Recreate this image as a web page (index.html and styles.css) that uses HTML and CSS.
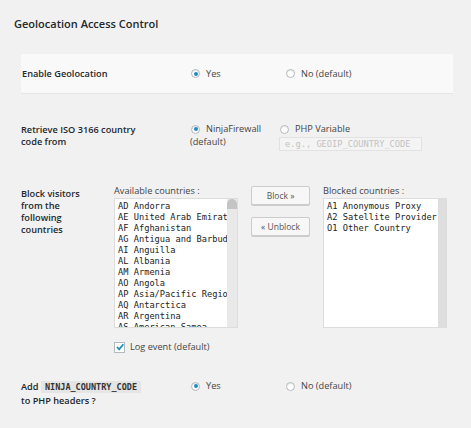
FILE: index.html
```html
<!DOCTYPE html>
<html>
<head>
<meta charset="utf-8">
<link rel="stylesheet" href="styles.css">
</head>
<body>
<h3 class="title">Geolocation Access Control</h3>

<div class="row row-box">
  <div class="label">Enable Geolocation</div>
  <div class="opts">
    <label class="opt opt-first"><span class="radio on"></span>Yes</label>
    <label class="opt"><span class="radio"></span>No (default)</label>
  </div>
</div>

<div class="row row-src">
  <div class="label">Retrieve ISO 3166 country<br>code from</div>
  <div class="opts">
    <div class="src-col">
      <label class="opt"><span class="radio on"></span>NinjaFirewall</label>
      <div class="src-default">(default)</div>
    </div>
    <div class="src-col">
      <label class="opt"><span class="radio"></span>PHP Variable</label>
      <div class="php-input">e.g., GEOIP_COUNTRY_CODE</div>
    </div>
  </div>
</div>

<div class="row row-block">
  <div class="label label-narrow">Block visitors<br>from the<br>following<br>countries</div>
  <div class="lists">
    <div class="list-col">
      <div class="list-title">Available countries :</div>
      <div class="listbox">
        <div class="items">
          <div>AD Andorra</div>
          <div>AE United Arab Emirates</div>
          <div>AF Afghanistan</div>
          <div>AG Antigua and Barbuda</div>
          <div>AI Anguilla</div>
          <div>AL Albania</div>
          <div>AM Armenia</div>
          <div>AO Angola</div>
          <div>AP Asia/Pacific Region</div>
          <div>AQ Antarctica</div>
          <div>AR Argentina</div>
          <div>AS American Samoa</div>
        </div>
        <div class="sbar"><div class="thumb"></div></div>
      </div>
      <label class="check-row"><span class="checkbox"><svg viewBox="0 0 10 10" width="10" height="10"><path d="M2 5 L4.2 7.3 L8.3 2.3" fill="none" stroke="#1e8cbe" stroke-width="1.8"/></svg></span>Log event (default)</label>
    </div>
    <div class="btn-col">
      <button class="btn">Block »</button>
      <button class="btn">« Unblock</button>
    </div>
    <div class="list-col">
      <div class="list-title">Blocked countries :</div>
      <div class="listbox listbox-r">
        <div class="items">
          <div>A1 Anonymous Proxy</div>
          <div>A2 Satellite Provider</div>
          <div>O1 Other Country</div>
        </div>
        <div class="sbar sbar-r"></div>
      </div>
    </div>
  </div>
</div>

<div class="row row-hdr">
  <div class="label">Add <code class="code">NINJA_COUNTRY_CODE</code><br>to PHP headers ?</div>
  <div class="opts">
    <label class="opt opt-first"><span class="radio on"></span>Yes</label>
    <label class="opt"><span class="radio"></span>No (default)</label>
  </div>
</div>
</body>
</html>
```

FILE: styles.css
```css
html, body {
  margin: 0;
  padding: 0;
  background: #f1f1f1;
}
body {
  font-family: "Open Sans", "Liberation Sans", sans-serif;
  font-size: 9.2px;
  color: #444;
  width: 471px;
  height: 428px;
  overflow: hidden;
}
.title {
  margin: 0;
  padding: 16px 0 0 14px;
  font-size: 11px;
  font-weight: 600;
  color: #23282d;
  line-height: 16px;
}
.row {
  display: flex;
  margin-left: 21px;
  width: 432px;
}
.label {
  width: 169px;
  flex: none;
  font-weight: 600;
  color: #23282d;
  line-height: 12px;
}
.label-narrow {
  width: 93px;
}
.opts {
  display: flex;
  align-items: flex-start;
}
.opt {
  display: flex;
  align-items: center;
  line-height: 12px;
  white-space: nowrap;
}
.opt-first {
  width: 95px;
}
.radio {
  width: 7px;
  height: 7px;
  border: 1px solid #b4b9be;
  border-radius: 50%;
  background: #fff;
  box-shadow: inset 0 1px 1px rgba(0,0,0,0.1);
  margin: 0 6px 0 1px;
  display: flex;
  align-items: center;
  justify-content: center;
  flex: none;
}
.radio.on::after {
  content: "";
  width: 4px;
  height: 4px;
  border-radius: 50%;
  background: #1e8cbe;
}
.row-box {
  margin-top: 22px;
  background: #f9f9f9;
  border-bottom: 1px solid #e5e5e5;
  height: 39px;
  align-items: center;
}
.row-box .label {
  padding-left: 1px;
  width: 168px;
}
.row-src {
  margin-top: 29px;
}
.row-src .label {
  padding-top: 1px;
}
.src-col {
  display: flex;
  flex-direction: column;
}
.src-col:first-child {
  width: 89px;
}
.src-default {
  line-height: 14px;
}
.php-input {
  margin-top: 2px;
  width: 136px;
  height: 12px;
  border: 1px solid #e2e2e2;
  background: #f4f4f4;
  font-family: "DejaVu Sans Mono", monospace;
  font-size: 8.7px;
  line-height: 12px;
  color: #c2c2c2;
  padding-left: 5px;
}
.row-block {
  margin-top: 34px;
}
.row-block .label {
  padding-top: 3px;
}
.lists {
  display: flex;
  align-items: flex-start;
}
.list-col {
  display: flex;
  flex-direction: column;
}
.list-title {
  line-height: 12px;
  color: #444;
}
.listbox {
  display: flex;
  width: 122px;
  height: 128px;
  border: 1px solid #ddd;
  background: #fff;
  margin-top: 1px;
  overflow: hidden;
}
.items {
  flex: 1;
  overflow: hidden;
  padding: 2px 0 0 3px;
  font-family: "DejaVu Sans Mono", monospace;
  font-size: 8.7px;
  line-height: 11px;
  color: #222;
  white-space: nowrap;
}
.sbar {
  width: 10px;
  flex: none;
  background: #e9e9e9;
}
.thumb {
  width: 10px;
  height: 10px;
  background: #c4c4c4;
  border-radius: 5px 5px 0 0;
}
.sbar-r {
  width: 8px;
  background: #dedede;
}
.check-row {
  display: flex;
  align-items: center;
  margin-top: 13px;
  line-height: 12px;
}
.checkbox {
  width: 9px;
  height: 9px;
  border: 1px solid #b4b9be;
  background: #fff;
  margin-right: 5px;
  position: relative;
  display: block;
}
.checkbox svg {
  position: absolute;
  left: 0;
  top: -1px;
}
.btn-col {
  display: flex;
  flex-direction: column;
  gap: 12px;
  margin: 1px 13px 0 13px;
}
.btn {
  width: 59px;
  height: 19px;
  border: 1px solid #ccc;
  border-radius: 2px;
  background: #f7f7f7;
  box-shadow: 0 1px 0 #ccc;
  font-family: "Open Sans", "Liberation Sans", sans-serif;
  font-size: 8.5px;
  color: #555;
  padding: 0;
}
.row-hdr {
  margin-top: 27px;
}
.row-hdr .label {
  line-height: 13px;
}
.row-hdr .opts {
  margin-top: 0;
}
.code {
  font-family: "DejaVu Sans Mono", monospace;
  font-size: 8.5px;
  font-weight: bold;
  background: #e5e5e5;
  padding: 1px 4px;
  color: #333;
}
```
